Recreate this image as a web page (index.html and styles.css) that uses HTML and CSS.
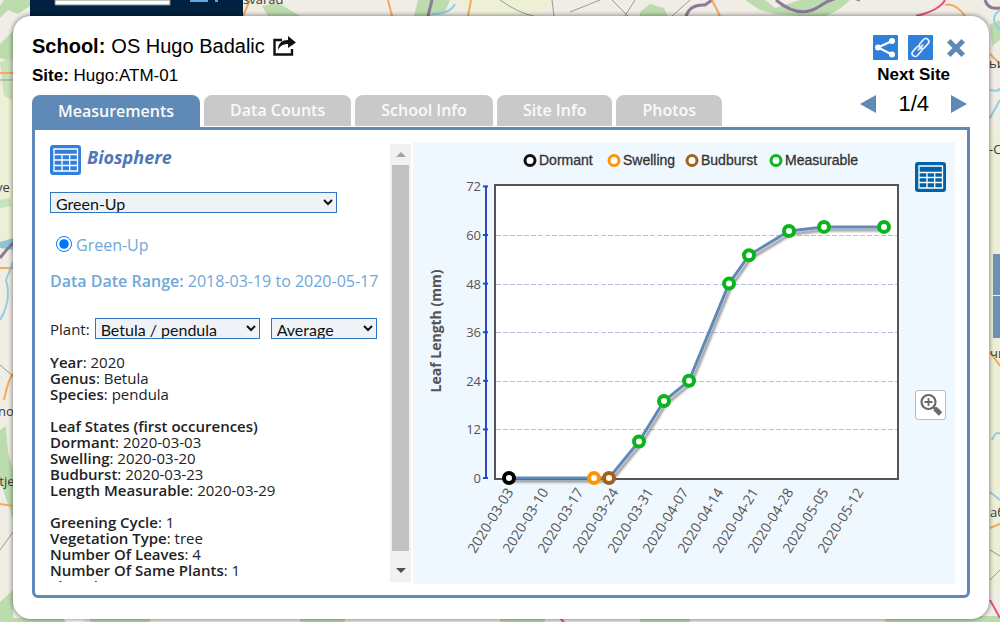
FILE: index.html
```html
<!doctype html>
<html lang="en">
<head>
<meta charset="utf-8" />
<title>Site Measurements</title>
<meta name="viewport" content="width=device-width, initial-scale=1" />
<link rel="stylesheet" href="styles.css">
</head>
<body>

<!-- map behind the dialog -->
<svg class="map" viewBox="0 0 1000 622" preserveAspectRatio="xMidYMid slice" aria-hidden="true">
  <rect width="1000" height="622" fill="#f0ede5"/>
  <g fill="#bcdcae">
    <path d="M0 18 8 10 18 14 30 6V0H4L0 6zM0 44 14 30 14 62 0 58z"/>
    <path d="M414 16 418 0 450 0 445 12 430 16zM262 6 278 3 290 10 300 16H268zM640 12 650 4 664 8 668 16H640z"/>
    <path d="M745 0H765L775 8 800 0H850L838 10 826 16H800L775 14 760 10z"/>
    <path d="M0 430 6 426 8 452 13 470V520L0 480zM0 602 13 590V622H0zM12 618H70V622H12zM90 618H150V622H90zM300 618H345V622H300zM500 618H545V622H500zM640 618H690V622H640zM885 616H1000V622H885z"/>
    <path d="M990 24 1000 20V40L992 46zM992 545 998 540V552H992z"/>
  </g>
  <g fill="#eef0d5">
    <path d="M0 80H13V250H0zM460 0H550L540 16H470zM990 130H1000V590H990zM0 150 13 148V236L0 240z"/>
  </g>
  <g fill="#c8e2bb"><path d="M0 200 10 198 12 206 0 208zM0 62 12 58V100L4 96z"/></g>
  <path d="M0 242 14 238V250L0 248z" fill="#8fc4d6"/>
  <g fill="none" stroke="#8e7899" stroke-width="3">
    <path d="M0 258Q6 250 13 243M686 16Q690 4 705 5L712 0M776 0Q800 20 820 6T860 0M985 0Q988 10 1000 8M432 0 428 16"/>
  </g>
  <g fill="none" stroke="#f4a95c" stroke-width="2">
    <path d="M0 73H13M388 0 392 16M471 0 468 16M712 0 720 16M0 268H13M4 400Q8 380 13 374M0 504 14 506M243 16 250 0M990 54 1000 64M990 352 1000 366M990 528 1000 524M945 5Q955 2 965 16"/>
  </g>
  <g fill="none" stroke="#e7527c" stroke-width="2"><path d="M916 16Q940 10 945 0M990 600 1000 618M560 618 564 622"/></g>
  <g fill="none" stroke="#91cede" stroke-width="2">
    <path d="M1000 10Q988 18 1000 30M990 90Q1000 92 1000 88M990 118 1000 100M0 320Q12 300 6 280L13 262M432 14Q450 14 455 4M992 440Q996 430 1000 434M990 492 1000 500"/>
  </g>
  <g fill="none" stroke="#999" stroke-width="1">
    <path d="M500 0Q520 14 534 16M552 0 554 16M570 12 600 0M612 0 628 16M635 0 625 16M672 16 690 0M0 80H13M0 365 13 376M0 550 13 532M990 550 1000 556M990 580 1000 570"/>
  </g>
  <g fill="#3c3c3c" font-family="Open Sans, sans-serif" font-size="13">
    <text x="243" y="4">svarad</text>
    <text x="-4" y="192">ve</text>
    <text x="-2" y="416">no</text>
    <text x="-4" y="486">itje</text>
    <text x="989" y="68">ьи</text>
    <text x="989" y="154">-С</text>
    <text x="990" y="358">чи</text>
    <text x="990" y="517">аб</text>
  </g>
  <path d="M30 0H243V30H30z" fill="#00213f"/>
  <path d="M55 0H170V5H55z" fill="#fff" stroke="#888"/>
  <path d="M190 0H208V2H190zM215 0H218V2H215z" fill="#61a5dd"/>
  <path d="M993 254H1000V295H993zM993 296H1000V338H993z" fill="#6f90b5"/>
  <circle cx="74" cy="610" r="14" fill="#fff"/>
</svg>

<main class="dialog">
  <header class="top">
    <div class="heading">
      <h1 class="school"><b>School:</b> OS Hugo Badalic
        <a href="#school" class="go" aria-label="Open school page">
          <svg width="24" height="20" viewBox="0 0 24 20"><path d="M9 4H1.500V18.500H19V13" fill="none" stroke="#111" stroke-width="2.400"/><path d="M5 14C5 7 9 4 15 4V0L23 6.500 15 12V8C10 8 7 10 5 14z" fill="#111"/></svg>
        </a>
      </h1>
      <p class="site"><b>Site:</b> Hugo:ATM-01</p>
      <nav class="tabs">
        <button class="tab active">Measurements</button>
        <button class="tab">Data Counts</button>
        <button class="tab">School Info</button>
        <button class="tab">Site Info</button>
        <button class="tab">Photos</button>
      </nav>
    </div>

    <div class="controls">
      <div class="actions">
        <button class="icon" aria-label="Share">
          <svg width="25" height="25" viewBox="0 0 25 25"><rect width="25" height="25" rx="1" fill="#2f7fdb"/><path d="M19 6 5 12.500 19 19.500" fill="none" stroke="#fff" stroke-width="2.200"/><g fill="#fff"><circle cx="19" cy="6" r="3"/><circle cx="5" cy="12.500" r="3"/><circle cx="19" cy="19.500" r="3"/></g></svg>
        </button>
        <button class="icon" aria-label="Copy link">
          <svg width="25" height="25" viewBox="0 0 25 25"><rect width="25" height="25" rx="1" fill="#2f7fdb"/><g fill="none" stroke="#e4f0ff" stroke-width="1.700" transform="rotate(-48 12.500 12.500)"><rect x="1.500" y="9.500" width="11.500" height="6" rx="3"/><rect x="12" y="9.500" width="11.500" height="6" rx="3"/><path d="M8.500 12.500H16.500"/></g></svg>
        </button>
        <button class="icon close" aria-label="Close">
          <svg width="18" height="18" viewBox="0 0 18 18"><path d="M3.500 3.500 14.500 14.500M14.500 3.500 3.500 14.500" stroke="#5f8ab8" stroke-width="5" stroke-linecap="square" stroke-linejoin="round"/></svg>
        </button>
      </div>
      <strong class="next">Next Site</strong>
      <div class="pager">
        <button class="icon" aria-label="Previous site"><svg width="16" height="18" viewBox="0 0 16 18"><path d="M16 0V18L0 9z" fill="#5f8ab8"/></svg></button>
        <span>1/4</span>
        <button class="icon" aria-label="Next site"><svg width="16" height="18" viewBox="0 0 16 18"><path d="M0 0V18L16 9z" fill="#5f8ab8"/></svg></button>
      </div>
    </div>
  </header>

  <section class="panel">
    <div class="info">
      <h2 class="sphere">
        <svg width="31" height="30" viewBox="0 0 31 30"><rect width="31" height="30" rx="3" fill="#2f7fdb"/><path d="M4 4H27.500V26H4zM4 9.500H27.500M4 15H27.500M4 20.500H27.500M12 9.500V26M19.700 9.500V26" fill="none" stroke="#fff" stroke-width="1.300"/></svg>
        <span>Biosphere</span>
      </h2>
      <select class="dataset" aria-label="Data set"><option>Green-Up</option></select>
      <label class="choice"><input type="radio" name="protocol" checked> <span>Green-Up</span></label>
      <p class="range"><b>Data Date Range:</b> 2018-03-19 to 2020-05-17</p>
      <div class="plant">
        <label for="plant">Plant:</label>
        <select id="plant" class="species"><option>Betula / pendula</option></select>
        <select class="average" aria-label="Value"><option>Average</option></select>
      </div>
      <p class="facts"><b>Year</b>: 2020<br><b>Genus</b>: Betula<br><b>Species</b>: pendula</p>
      <p class="facts"><b>Leaf States (first occurences)</b><br><b>Dormant</b>: 2020-03-03<br><b>Swelling</b>: 2020-03-20<br><b>Budburst</b>: 2020-03-23<br><b>Length Measurable</b>: 2020-03-29</p>
      <p class="facts"><b>Greening Cycle</b>: 1<br><b>Vegetation Type</b>: tree<br><b>Number Of Leaves</b>: 4<br><b>Number Of Same Plants</b>: 1<br><b>Elevation</b>: 98m</p>
    </div>

    <div class="scroll">
      <button class="icon" aria-label="Scroll up"><svg width="10" height="5" viewBox="0 0 10 5"><path d="M0 5H10L5 0z" fill="#a3a3a3"/></svg></button>
      <div class="thumb"></div>
      <button class="icon" aria-label="Scroll down"><svg width="10" height="5" viewBox="0 0 10 5"><path d="M0 0H10L5 5z" fill="#505050"/></svg></button>
    </div>

    <div class="chart">
      <svg id="plot" class="plot" viewBox="0 0 502 442" role="img" aria-label="Leaf length by date">
        <defs>
          <filter id="shadow" x="0" y="0" width="502" height="442" filterUnits="userSpaceOnUse">
            <feDropShadow dx="2" dy="3" stdDeviation="1" flood-opacity=".4"/>
          </filter>
        </defs>
      </svg>
      <div class="tools">
        <button class="icon" aria-label="Show data table">
          <svg width="31" height="30" viewBox="0 0 31 30"><rect width="31" height="30" rx="3" fill="#0062a8"/><path d="M4 4H27.500V26H4zM4 10.500H27.500M4 15.500H27.500M4 20.500H27.500M12 10.500V26M19.700 10.500V26" fill="none" stroke="#fff" stroke-width="1.300"/></svg>
        </button>
        <button class="icon zoom" aria-label="Zoom in">
          <svg width="24" height="24" viewBox="0 0 24 24"><g fill="none" stroke="#6a6a6a"><circle cx="9.500" cy="9" r="7" stroke-width="2.200"/><path d="M5.500 9H13.500M9.500 5V13" stroke-width="1.800"/><path d="M14.500 14 17 16.500" stroke-width="2.500"/><path d="M16 15.500 21.500 21" stroke-width="5"/></g></svg>
        </button>
      </div>
    </div>
  </section>
</main>

<script src="chart.js"></script>
</body>
</html>
```

FILE: chart.js
```js
/* days since 2020-03-03, leaf length in mm, colour of the leaf state */
const GREEN='#0ab41f', ORANGE='#ff9408', BROWN='#a4611c';
const DATA=[[0,0,'#000'],[17,0,ORANGE],[20,0,BROWN],[26,9,GREEN],[31,19,GREEN],[36,24,GREEN],
            [44,48,GREEN],[48,55,GREEN],[56,61,GREEN],[63,62,GREEN],[75,62,GREEN]];
const LEGEND=[['Dormant','#111',117],['Swelling',ORANGE,201],['Budburst',BROWN,279],['Measurable',GREEN,363]];
const x=d=>96+d*5, y=v=>336-v*4.05;
let out='';

/* legend */
for(const [name,color,cx] of LEGEND){
  out+=`<circle class="key" cx="${cx}" cy="18.500" r="5" stroke="${color}"/>
        <text class="legend" x="${cx+9}" y="23">${name}</text>`;
}

/* plot area, grid and value axis */
out+='<rect x="82.500" y="43.500" width="402" height="293" fill="#fff"/>';
for(let v=0;v<=72;v+=12){
  out+=`<text class="tick" x="68" y="${Math.round(y(v))+5}" text-anchor="end">${v}</text>
        <path class="axis" d="M70 ${y(v)}H75"/>`;
  if(v>0&&v<72) out+=`<path class="grid" d="M83 ${Math.round(y(v))+.5}H484"/>`;
}
out+=`<path class="axis" d="M73 ${y(72)}V${y(0)}"/>
      <rect class="frame" x="82" y="43" width="403" height="294"/>
      <text class="title" transform="translate(28 189) rotate(-90)" text-anchor="middle">Leaf Length (mm)</text>`;

/* dates */
for(let d=0;d<=70;d+=7){
  const date=new Date(Date.UTC(2020,2,3+d)).toISOString().slice(0,10);
  out+=`<text class="date" transform="translate(${x(d)+5} 350) rotate(-58)" text-anchor="end">${date}</text>`;
}

/* line and markers */
out+=`<g filter="url(#shadow)"><polyline class="line" points="${DATA.map(([d,v])=>x(d)+','+y(v)).join(' ')}"/></g>`;
for(const [d,v,color] of DATA) out+=`<circle class="mark" cx="${x(d)}" cy="${y(v)}" r="5" stroke="${color}"/>`;

document.getElementById('plot').insertAdjacentHTML('beforeend',out);
```

FILE: styles.css
```css
:root{
  --blue:#5f8ab8;
  --sans:"Liberation Sans",Arial,sans-serif;
  --human:"Lucida Sans","Open Sans",sans-serif;
}

*{margin:0;padding:0;box-sizing:border-box}
body{
  min-height:100vh;padding:16px 11px 3px 13px;
  font-family:var(--sans);color:#000;overflow:hidden;
}
button{border:0;background:none;font:inherit;cursor:pointer}
svg{display:block}
.map{position:absolute;top:0;left:0;z-index:-1;width:100%;height:100%}

/* === dialog === */
.dialog{
  padding:0 19px 21px;background:#fff;border-radius:18px;
  box-shadow:0 0 4px 1px rgba(0,0,0,.4);
}
.top{display:flex;justify-content:space-between;align-items:flex-start}
.heading{padding-top:15px}
.school{display:flex;align-items:center;gap:6px;font-size:20px;font-weight:400;line-height:30px}
.go{margin-left:2px}
.site{font-size:17px;line-height:30px}

/* === tabs === */
.tabs{display:flex;align-items:flex-start;gap:4px;padding-top:4px}
.tab{
  height:31px;padding:0 26px;border-radius:8px 8px 0 0;
  background:#c9c9c9;color:#fafafa;
  font:600 16px/31px var(--human);
}
.tab.active{height:32px;background:var(--blue)}

/* === site pager === */
.controls{display:flex;flex-direction:column;align-items:center;padding:19px 3px 0 0}
.actions{display:flex;align-items:center;align-self:flex-end;gap:10px;margin-right:2px}
.icon{display:flex;align-items:center;justify-content:center}
.close{margin-left:4px}
.next{font-size:17px;line-height:30px}
.pager{display:flex;align-items:center;gap:22px;font-size:22px;line-height:28px}

/* === content panel === */
.panel{
  display:flex;padding:12px 12px 11px 15px;
  border:3px solid var(--blue);border-radius:0 0 6px 6px;
}
.info{
  flex:0 0 340px;height:440px;overflow:hidden;
  color:#222;font:15px/16px var(--human);
}
.sphere{display:flex;gap:6px;padding-top:3px;color:#5077b5;font:italic 700 18px/24px var(--human)}
select{
  height:21px;padding-left:1px;border:1px solid #2f78c0;border-radius:0;
  background:#eff3f7;color:#111;font:16px/19px Lato,sans-serif;
}
.dataset{display:block;width:287px;margin-top:17px}
.choice{display:flex;align-items:center;gap:4px;margin:17px 0 0 6px;color:#70a7d8;font-size:16px;line-height:24px}
.choice input{width:16px;height:16px}
.choice span{padding-top:3px}
.range{margin-top:14px;color:#70a7d8;font-size:16px;line-height:20px;white-space:nowrap}
.plant{display:flex;align-items:center;margin:27px 0 15px}
.species{width:165px;margin:0 11px 0 5px}
.average{width:106px}
.facts{margin-bottom:16px}
.range b,.facts b{font-weight:600}

/* === scrollbar === */
.scroll{flex:0 0 21px;display:flex;flex-direction:column;margin:2px 0;padding:0 2px;background:#f1f1f1}
.scroll .icon{height:21px}
.scroll .icon:last-child{height:31px;padding-top:8px}
.thumb{flex:1;background:#c1c1c1}

/* === chart === */
.chart{flex:1;display:flex;margin-left:2px;background:#eff7ff}
.plot{flex:1;min-width:0}
.tools{flex:0 0 40px;display:flex;flex-direction:column;align-items:flex-start;gap:198px;padding-top:20px}
.zoom{width:31px;height:30px;border:1px solid #bbb;border-radius:3px;background:#fff}
.plot text{fill:#555;font-family:var(--human)}
.plot .legend{fill:#333;font:14px var(--sans);stroke:#333;stroke-width:.3px}
.plot .tick{font-size:13px}
.plot .date{font-size:14px}
.plot .title{font-size:14px;font-weight:700}
.key{fill:#fff;stroke-width:3px}
.mark{fill:#fff;stroke-width:4px}
.axis{stroke:#2a47c8;stroke-width:2px}
.grid{stroke:#b3bfe6;stroke-dasharray:5 2}
.frame{fill:none;stroke:#555;stroke-width:2px}
.line{fill:none;stroke:var(--blue);stroke-width:3px;stroke-linejoin:round}
```
